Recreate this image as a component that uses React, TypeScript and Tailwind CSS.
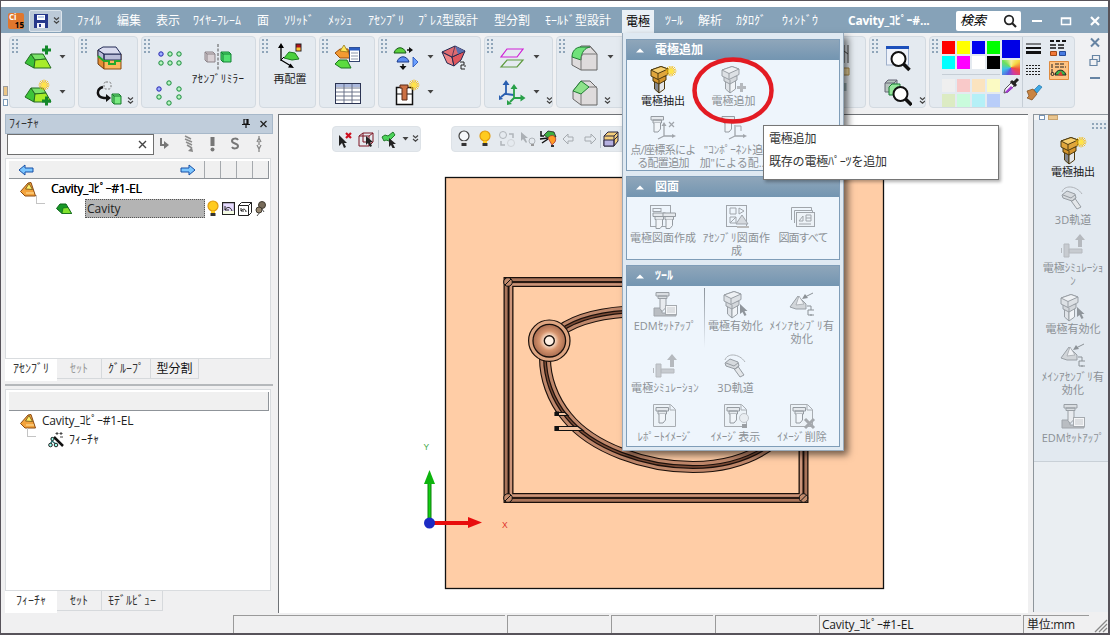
import React from 'react';

type P = { children?: React.ReactNode };

const Svg = ({ w = 28, h = 28, c = '', children }: { w?: number; h?: number; c?: string } & P) => (
  <svg width={w} height={h} viewBox={`0 0 ${w} ${h}`} className={`shrink-0 ${c}`} fill="none">
    {children}
  </svg>
);

/* ---------- small marks ---------- */
const Grip = () => (
  <Svg w={8} h={17} c="mt-px">
    {[1, 5, 9, 13].map((y) => (
      <g key={y} fill="#8fa5b9">
        <rect x="0" y={y} width="2" height="2" />
        <rect x="4" y={y} width="2" height="2" />
      </g>
    ))}
  </Svg>
);
const Drop = ({ c = '' }: { c?: string }) => (
  <Svg w={7} h={5} c={c}>
    <path d="M.5 0h6L3.500 3.500z" fill="#444" />
  </Svg>
);
const More = ({ c = '' }: { c?: string }) => (
  <Svg w={7} h={8} c={c}>
    <path d="M1 .5l2.500 2.200L6 .5M1 4l2.500 2.200L6 4" stroke="#444" strokeWidth="1.200" />
  </Svg>
);
const Sun = ({ x, y }: { x: number; y: number }) => (
  <g transform={`translate(${x} ${y})`}>
    <path d="M-5.500 0h11M0-5.500v11M-4-4l8 8M-4 4l8-8M-5-2l10 4M-5 2l10-4M-2-5l4 10M-2 5l4-10" stroke="#f4b800" strokeWidth=".8" />
    <circle r="2.600" fill="#ffe44a" />
  </g>
);

/* ---------- ribbon icons ---------- */
const Wedge = () => (
  <g stroke="#236b22" strokeLinejoin="round">
    <path d="M1 19L7 10l4 6-1 8z" fill="#3cc43a" />
    <path d="M7 10l12 0 3 5-11 1z" fill="#7be36a" />
    <path d="M11 16l11-1 5 9H10z" fill="#a8ec2a" />
  </g>
);
const AddPart = () => (
  <Svg>
    <Wedge />
    <path d="M18 6h9M22.500 1.500v9" stroke="#13882a" strokeWidth="3" />
  </Svg>
);
const NewPart = () => (
  <Svg>
    <g transform="translate(0 -1)"><Wedge /></g>
    <Sun x={20} y={6} />
    <path d="M18 22h9M22.500 17.500v9" stroke="#13882a" strokeWidth="3" />
  </Svg>
);
const MoldBox = () => (
  <Svg>
    <path d="M3 6l6 4v15l-6-5z" fill="#e58f33" stroke="#6b3a10" strokeLinejoin="round" />
    <path d="M9 10h17v15H9z" fill="#fbb85c" stroke="#8b4a10" />
    <path d="M3 6l6 4v7l-6-5zM9 10h17v6H9z" fill="#b9bcd8" stroke="#222a55" strokeLinejoin="round" />
    <path d="M3 6l5-3h13l5 7H9z" fill="#d9dbee" stroke="#222a55" strokeLinejoin="round" />
    <path d="M3 12l6 5h5v3h6v-3h6" stroke="#25a82b" strokeWidth="2" />
  </Svg>
);
const Replace = () => (
  <Svg>
    <rect x="9" y="3" width="7" height="7" rx="2" stroke="#777" strokeDasharray="2 1.500" />
    <path d="M8 8c-7 2-7 10 1 11h3" stroke="#111" strokeWidth="2.500" />
    <path d="M11 15l5 4-5 4z" fill="#111" />
    <path d="M17 15h7l2 2v8h-7l-2-2z" fill="#79ea80" stroke="#167a2c" />
    <path d="M17 15l2 2h7m-7 0v8" stroke="#167a2c" />
  </Svg>
);
const Dot = ({ x, y, b }: { x: number; y: number; b?: boolean }) => (
  <circle cx={x} cy={y} r="2.200" fill={b ? '#9fb0ff' : '#b9f5c0'} stroke={b ? '#2424b0' : '#188a3c'} />
);
const GridDots = () => (
  <Svg><Dot x={5} y={10} b /><Dot x={14} y={10} /><Dot x={23} y={10} /><Dot x={5} y={19} /><Dot x={14} y={19} /><Dot x={23} y={19} /></Svg>
);
const RingDots = () => (
  <Svg><Dot x={13} y={4} /><Dot x={3} y={10} b /><Dot x={23} y={10} /><Dot x={3} y={18} /><Dot x={23} y={18} /><Dot x={13} y={24} /></Svg>
);
const Mirror = () => (
  <Svg>
    <path d="M1 9h8l2 2v8H3l-2-2z" fill="#d8d0d4" stroke="#8b8388" /><path d="M1 9l2 2h8m-8 0v8" stroke="#8b8388" />
    <path d="M14 1v26" stroke="#555" strokeDasharray="3 1.500" />
    <path d="M17 9h8l2 2v8h-8l-2-2z" fill="#52e070" stroke="#128235" /><path d="M17 9l2 2h8m-8 0v8" stroke="#128235" />
  </Svg>
);
const Relocate = () => (
  <Svg>
    <path d="M5 19V4m0 14l10 6" stroke="#000" strokeWidth="1.300" />
    <path d="M5 1l3 5H2zM18 26l-6-.5 2.500-4z" fill="#000" />
    <path d="M8 16l5-6 6 1 4 6-7 1z" fill="#4bd03e" stroke="#1e7a22" />
    <rect x="20" y="2" width="5" height="7" fill="#b3121a" stroke="#222" /><rect x="20.500" y="5.500" width="4" height="3" fill="#f5c932" />
    <path d="M8 15l-3 3" stroke="#000" />
  </Svg>
);
const PartList = () => (
  <Svg>
    <path d="M1 9l5-4h8l2 9H6z" fill="#f39a32" stroke="#9a4f0e" /><path d="M6 7l4-6 4 7z" fill="#ffe75a" stroke="#8a6a10" strokeWidth=".7" />
    <path d="M1 20l4-4h8l4 8H7z" fill="#5bdc3e" stroke="#1c7423" />
    <rect x="15.500" y="3.500" width="10" height="14" fill="#fff" stroke="#32446f" /><path d="M15 5h11" stroke="#2b5cc0" strokeWidth="3" /><path d="M17 9h7m-7 3h7m-7 3h7" stroke="#8c97ab" />
  </Svg>
);
const Table = () => (
  <Svg>
    <rect x="1.500" y="4.500" width="25" height="20" fill="#fff" stroke="#2b3453" />
    <path d="M2 6.500h24" stroke="#aab8dc" strokeWidth="3" /><path d="M2 9h24M2 13h24M2 17h24M2 21h24M10 5v19M18 5v19" stroke="#5d6680" strokeWidth=".9" />
  </Svg>
);
const MoldParts = () => (
  <Svg>
    <path d="M1 9c2-7 10-7 12 0z" fill="#5bd13d" stroke="#16571b" /><path d="M4 18c2-7 10-7 12 0z" fill="#5d8df2" stroke="#1b3a8a" />
    <path d="M14 6h4M10 20v4" stroke="#111" strokeWidth="1.500" /><path d="M16 3l4 3-4 3zM6.500 22h7L10 26z" fill="#111" />
    <path d="M20 13l5 5-5 5z" fill="#6aa0ff" stroke="#1f4cb5" strokeWidth=".8" />
  </Svg>
);
const NewMold = () => (
  <Svg>
    <rect x="3.500" y="8.500" width="16" height="17" fill="#fff" stroke="#111" strokeWidth="1.500" /><path d="M3 15h17" stroke="#111" />
    <path d="M7 6h8v3h-1v12H9V9H7z" fill="#cc7144" stroke="#5b2a16" /><Sun x={21} y={6} />
  </Svg>
);
const RedBlock = () => (
  <Svg>
    <path d="M2 8l10 5 2 9-7-3z" fill="#f08486" stroke="#22284f" strokeLinejoin="round" />
    <path d="M12 13l13-6-4 9-7 6z" fill="#e0565d" stroke="#22284f" strokeLinejoin="round" />
    <path d="M2 8l13-6 10 5-13 6z" fill="#e06a70" stroke="#22284f" strokeLinejoin="round" />
    <path d="M15 2l10 5-7 3z" fill="#5a6fae" /><path d="M15 2l-3 11" stroke="#22284f" strokeWidth=".7" />
    <path d="M20 18h4v3h-3v4h4M24 22h2" stroke="#222" />
  </Svg>
);
const Planes = () => (
  <Svg>
    <path d="M9 5h16l-6 8H3z" stroke="#d020d6" strokeWidth="1.200" /><path d="M9 16h16l-6 7H3z" stroke="#5e9a3e" strokeWidth="1.200" />
  </Svg>
);
const Axes = () => (
  <Svg>
    <path d="M8 4v11l8 1M8 14l-5 4" stroke="#2a5fb0" strokeWidth="1.800" /><path d="M8 1l3.500 5h-7zM1 21v-5l4 4z" fill="#2a5fb0" />
    <path d="M16 8v11h8M16 19l-4 4" stroke="#28a048" strokeWidth="1.800" /><path d="M16 5l3.500 5h-7zM27.500 19l-5 3.500v-7zM9 26v-5l5 4z" fill="#28a048" />
  </Svg>
);
const Fillet = () => (
  <Svg>
    <path d="M1 13V21l9 5h16V10l-7-8H10z" fill="#dedbdc" stroke="#666" /><path d="M1 13c0-6 4-10 9-10h9c-5 1-9 5-9 13z" fill="#6fe27a" stroke="#1f7c33" strokeLinejoin="round" /><path d="M10 16v10M10 16c0-3 1-5 2-6h14M19 2.500l7 7.500" stroke="#777" />
  </Svg>
);
const Chamfer = () => (
  <Svg>
    <path d="M2 12v8l8 6h16V9l-7-7h-9z" fill="#dedbdc" stroke="#666" /><path d="M2 12L10 2l8 6-8 7z" fill="#8de28a" stroke="#1f7c33" strokeLinejoin="round" /><path d="M10 15v11M18 8h8" stroke="#777" />
  </Svg>
);
const Magnify = () => (
  <><circle cx="14.500" cy="15" r="7" fill="#fff" stroke="#111" strokeWidth="2" /><path d="M19.500 20l6 6" stroke="#111" strokeWidth="3.500" /></>
);
const ZoomWin = () => (
  <Svg><rect x="2.500" y="3" width="22" height="18" fill="#eef2fa" stroke="#9fb0cb" /><path d="M2 3.500h23" stroke="#1d50bb" strokeWidth="3" /><Magnify /></Svg>
);
const ZoomSel = () => (
  <Svg><path d="M1 4l3-3h9v9l-3 3H1zM1 4h9v9M10 4l3-3" fill="#b7c5bf" stroke="#667" /><path d="M5 8l3-3h8v8l-3 3H5z" fill="#95e69b" stroke="#177d31" /><g transform="translate(2 0)"><Magnify /></g></Svg>
);

/* ---------- electrode icons ---------- */
const Electrode = ({ off }: { off?: boolean }) => (
  <g stroke={off ? '#999fa5' : '#4c3a10'} strokeLinejoin="round">
    <path d="M5.500 15v8l4.500 4V15z" fill={off ? '#dfe3e8' : '#85888f'} />
    <path d="M10 27l5.500-4V13L10 16z" fill={off ? '#f1f4f7' : '#e4e6ea'} />
    <path d="M4 11v4l6 3 7-4v-4z" fill={off ? '#d4d8dc' : '#d3942d'} />
    <path d="M2 4v6l7 3.500 10-5V3L12 .5z" fill={off ? '#dde1e5' : '#e0a63c'} />
    <path d="M2 4L12 .5 19 3 9 7.500z" fill={off ? '#eef1f4' : '#f6cf70'} /><path d="M9 7.500v6M10 14v4" />
  </g>
);
const Extract = () => <Svg><Electrode /><Sun x={22} y={5} /></Svg>;
const AddElec = () => <Svg><Electrode off /><path d="M17 21.500h9M21.500 17v9" stroke="#b5b9be" strokeWidth="3" /></Svg>;
const Activate = () => <Svg><Electrode off /><path d="M18 13v10l2.500-2 2 4 2-1-2-4h3z" fill="#8f959b" /></Svg>;
const Holder = ({ x = 0, y = 0 }: { x?: number; y?: number }) => (
  <g transform={`translate(${x} ${y})`} stroke="#959ba1"><path d="M0 .5h12.500v3.500H0zM2 4h8.500v3H2z" fill="#e5e9ed" /><path d="M3 7v9h4l2.500-3V7" fill="#f1f5f9" /></g>
);
const PlacePt = () => (
  <Svg><Holder x={2} y={1} /><path d="M15 10v11h10M15 21l-6 3" stroke="#a0a5ab" strokeWidth="1.300" /><path d="M15 7l2.500 4h-5zM27 21l-4 2v-4z" fill="#a0a5ab" /><path d="M20 7l5 5m0-5l-5 5" stroke="#a0a5ab" strokeWidth="1.200" /></Svg>
);
const PlaceComp = () => (
  <Svg><Holder x={2} y={1} /><path d="M15 10v11h10M15 21l-6 3" stroke="#a0a5ab" strokeWidth="1.300" /><path d="M27 21l-4 2v-4z" fill="#a0a5ab" /><path d="M16 11h5v5" stroke="#a0a5ab" /></Svg>
);
const Drawing1 = () => (
  <Svg><rect x="1.500" y="2.500" width="20" height="21" stroke="#a0a5ab" /><rect x="4" y="5.500" width="8" height="3" stroke="#a0a5ab" /><Holder x={4} y={9.500} /><Holder x={14} y={9.500} /></Svg>
);
const Drawing2 = () => (
  <Svg><rect x="3.500" y="2.500" width="20" height="21" stroke="#a0a5ab" /><path d="M7 5h6v6H7zM16 5l5 3-5 3zM7 14h6v6H7zM7 20l6-6" stroke="#a0a5ab" /><path d="M13 21l6-9 6 9z" fill="#d6dadf" stroke="#a0a5ab" /><path d="M14 24h12" stroke="#bbb" strokeWidth="2" /></Svg>
);
const DrawingAll = () => (
  <Svg><path d="M2.500 17V4.500h20V7M5.500 20V7.500h18v2" stroke="#a0a5ab" /><rect x="7.500" y="9.500" width="18" height="14" fill="#edf2f7" stroke="#a0a5ab" /><path d="M10 18l4-5v5zM17 12h5v6h-5zM17 15h5M10 21h12" stroke="#a0a5ab" /></Svg>
);
const Edm = () => (
  <Svg><path d="M3 17h8v5h14v3H3z" fill="#b9bdc2" stroke="#a0a5ab" /><path d="M5 1.500h13v3.500H5zM7 5h9v2.500H7z" fill="#d9dde1" stroke="#999fa5" /><path d="M9 7.500v10l2 3 4-4v-9z" fill="#e8ebef" stroke="#999fa5" /><rect x="14.500" y="14.500" width="11" height="9" fill="#f5f6f8" stroke="#a5aaaf" /><path d="M16 17h8m-8 2h8m-8 2h8" stroke="#c5c9cd" /></Svg>
);
const MainAct = () => (
  <Svg><path d="M2 16L10 5l8 8v5H8z" fill="#d1d5d9" stroke="#999fa5" /><path d="M8 14l3-9 5 8z" fill="#f0f2f5" stroke="#a4a9ae" strokeWidth=".8" /><path d="M25 2l-8 4" stroke="#8b9196" /><path d="M14 8l3-5 3 4z" fill="#8b9196" /><path d="M19 15h4v4h-3v5h4M23 19h3M22 24h4" stroke="#8b9196" /></Svg>
);
const Simul = () => (
  <Svg><path d="M5 11h5v13H5zM2.500 15v5M10 16h13v4H10z" fill="#c7cbd0" stroke="#b6babf" /><path d="M19 14V7h-3l5-6 5 6h-3v7z" fill="#b5b9be" /></Svg>
);
const Orbit = () => (
  <Svg><path d="M3 7c2-7 14-7 20 2" stroke="#b0b4b9" /><path d="M10 13l8 11 4-2-7-10" fill="#e4e7ea" stroke="#969ca2" /><path d="M3 10l5-4 8 3 1 4-4 3-9-3z" fill="#d6dade" stroke="#969ca2" /><path d="M4 10l8 3 4-3M13 16l4-3" stroke="#969ca2" /></Svg>
);
const Sheet = ({ children }: P) => (
  <Svg><path d="M2.500 2.500h17l5 5v17h-22zM19 3v5h5" fill="#edf3f8" stroke="#a8adb2" /><Holder x={5} y={5} />{children}</Svg>
);
const Report = () => <Sheet />;
const ShowImg = () => <Sheet><circle cx="22" cy="16" r="4.500" fill="#e9edf1" stroke="#bfc4c9" /><path d="M20 22h5v4h-5z" fill="#9b9fa4" /></Sheet>;
const DelImg = () => <Sheet><path d="M17 17l9 9m0-9l-9 9" stroke="#a4a8ad" strokeWidth="3" /></Sheet>;

/* ---------- tree icons ---------- */
const Pyramid = () => (
  <Svg w={16} h={15}><path d="M.5 9.500L8 1l3-.5L15.500 14H5z" fill="#f3a33c" stroke="#8a4b12" /><path d="M5.500 7L9 1.500l3.500 6z" fill="#fff06a" stroke="#6e4f16" strokeWidth=".8" /><path d="M6 11h8" stroke="#ffe3a0" /></Svg>
);
const GreenPart = () => (
  <Svg w={16} h={12}><path d="M.5 5.500L4 1h6l5.500 9.500H6z" fill="#189727" stroke="#0c641b" /><path d="M7 5l5-.5 3.500 6H6z" fill="#82e22e" stroke="#0c641b" strokeWidth=".7" /></Svg>
);
const Bulb = ({ on }: { on?: boolean }) => (
  <Svg w={12} h={18}><circle cx="6" cy="6" r="5" fill={on ? '#ffcb1f' : '#f6f8fa'} stroke={on ? '#e09b10' : '#444'} strokeWidth="1.200" /><path d="M4 11h4v2H4z" fill={on ? '#ffcb1f' : '#ddd'} /><path d="M3.500 13h5v3h-5z" fill="#333" /></Svg>
);
const Wand = () => (
  <Svg w={16} h={16}><path d="M6 5l9 9" stroke="#111" strokeWidth="2.500" /><path d="M4 5v4M2 13l2-4 5 4" stroke="#1f6c6c" strokeWidth="1.300" /><circle cx="2.500" cy="13" r="1.800" fill="#9fe" stroke="#222" /><circle cx="8" cy="13" r="1.800" fill="#9fe" stroke="#222" /><circle cx="4.500" cy="7" r="1.600" fill="#9fe" stroke="#222" /><path d="M9 0v3M7.500 1.500h3M13 0v3m-1.500-1.500h3M12 5h3" stroke="#444" /></Svg>
);
const BlueArrow = ({ flip }: { flip?: boolean }) => (
  <Svg w={16} h={12} c={flip ? 'rotate-180' : ''}><path d="M1 6l6-5v3h8v4H7v3z" fill="#7cc6ff" stroke="#174fa5" /></Svg>
);

/* ---------- layout pieces ---------- */
const Group = ({ w, children }: { w: string } & P) => (
  <div className={`mr-[3px] flex h-[72px] shrink-0 items-start overflow-hidden rounded-sm border border-[#d3dae1] bg-[#e4eaf0] pl-[2px] ${w}`}>
    <Grip />
    {children}
  </div>
);
const Stack = ({ c = '', children }: { c?: string } & P) => <div className={`flex shrink-0 flex-col pt-[3px] ${c}`}>{children}</div>;
const Row = ({ children }: P) => <div className="flex h-[35px] items-center gap-[7px]">{children}</div>;

const menus: [string, string][] = [
  ['ﾌｧｲﾙ', 'w-[40px]'], ['編集', 'w-[39px]'], ['表示', 'w-[37px]'], ['ﾜｲﾔｰﾌﾚｰﾑ', 'w-[64px]'], ['面', 'w-[27px]'],
  ['ｿﾘｯﾄﾞ', 'w-[44px]'], ['ﾒｯｼｭ', 'w-[40px]'], ['ｱｾﾝﾌﾞﾘ', 'w-[50px]'], ['ﾌﾟﾚｽ型設計', 'w-[76px]'], ['型分割', 'w-[51px]'], ['ﾓｰﾙﾄﾞ型設計', 'w-[77px]'],
];
const menus2: [string, string][] = [['ﾂｰﾙ', 'w-[33px]'], ['解析', 'w-[38px]'], ['ｶﾀﾛｸﾞ', 'w-[46px]'], ['ｳｨﾝﾄﾞｳ', 'w-[66px]']];

const TitleBar = () => (
  <header className="flex h-[26px] shrink-0 items-center bg-[#86a2b8] text-[12px] text-white">
    <div className="ml-[7px] mt-px flex h-4 w-4 flex-col items-start rounded-[2px] bg-[#e0772d] text-[8px] font-bold leading-[8px]">
      <span className="pl-px">Ci</span><span className="self-end text-black">15</span>
    </div>
    <div className="ml-[5px] mt-px flex h-[22px] w-[33px] items-center rounded-[2px] border border-[#dce5ec] bg-[#bccad8] pl-[4px]">
      <Svg w={14} h={14}><path d="M0 0h14v14H0z" fill="#26388b" /><path d="M3 1h8v5H3z" fill="#fff" /><path d="M3 9h8v5H3z" fill="#f4f4fa" /><path d="M4 3h6" stroke="#7fa0dc" /><path d="M5 10h2v3H5z" fill="#26388b" /></Svg>
      <More c="ml-[5px]" />
    </div>
    <nav className="ml-[15px] flex items-center whitespace-nowrap">
      {menus.map(([t, w]) => <span key={t} className={`mt-[2px] shrink-0 ${w}`}>{t}</span>)}
      <span className="mt-[3px] flex h-[23px] w-[32px] shrink-0 items-center justify-center bg-[#e9f0f6] text-black">電極</span>
      <span className="w-[11px]" />
      {menus2.map(([t, w]) => <span key={t} className={`mt-[2px] shrink-0 ${w}`}>{t}</span>)}
    </nav>
    <span className="mt-[2px] w-[108px] shrink-0 whitespace-nowrap font-bold tracking-[-0.2px]">Cavity_ｺﾋﾟｰ#...</span>
    <div className="mt-px flex h-[20px] w-[65px] shrink-0 items-center justify-between rounded-[2px] bg-white pl-[4px] pr-[4px] text-[13px] italic text-black">
      検索
      <Svg w={14} h={14}><circle cx="6" cy="6" r="4.300" stroke="#222" strokeWidth="1.700" /><path d="M9 9l4 4" stroke="#222" strokeWidth="2.200" /></Svg>
    </div>
    <Svg w={70} h={14} c="ml-[10px] mt-[2px]"><path d="M1 7h10" stroke="#fff" strokeWidth="2" /><path d="M30.500 4h9v6.500h-9zM30 4.500h10" stroke="#fff" strokeWidth="1.500" /><path d="M60 3l8 8m0-8l-8 8" stroke="#fff" strokeWidth="2.200" /></Svg>
  </header>
);

const vivid = ['bg-[#f00]', 'bg-[#ff0]', 'bg-[#0000f0]', 'bg-[#0f0]', 'bg-[#0ff]', 'bg-[#f0f]', 'bg-white', 'bg-black'];
const pale = ['bg-[#efefef]', 'bg-[#f9c9c9]', 'bg-[#fbe3bf]', 'bg-[#fbfac3]', 'bg-[#dcebc3]', 'bg-[#c9fbdc]', 'bg-[#b5f0f7]', 'bg-[#b8cdf9]'];

const Ribbon = () => (
  <div className="flex h-[77px] shrink-0 items-start bg-[#f0f1f3] pt-[3px]">
    <div className="flex w-[8px] shrink-0 flex-col gap-[3px] pl-[2px] pt-[50px]">
      <span className="h-[10px] w-[5px] border border-[#9d9d9d] bg-[#ecc687]" /><span className="h-[7px] w-[5px] border border-[#7c9bb8] bg-white" />
    </div>
    <Group w="w-[66px]"><Stack c="ml-[4px]"><Row><AddPart /><Drop /></Row><Row><NewPart /><Drop /></Row></Stack></Group>
    <Group w="w-[60px]"><Stack c="ml-[6px]"><Row><MoldBox /></Row><Row><Replace /><More c="-ml-[3px] mt-4" /></Row></Stack></Group>
    <Group w="w-[115px]">
      <Stack c="ml-[4px]"><Row><GridDots /></Row><Row><RingDots /></Row></Stack>
      <div className="ml-[4px] flex w-[60px] shrink-0 flex-col items-center pt-[6px] text-[11px] leading-[16px] tracking-[0.4px] whitespace-nowrap"><Mirror />ｱｾﾝﾌﾞﾘﾐﾗｰ</div>
    </Group>
    <Group w="w-[57px]"><div className="ml-[1px] flex w-[38px] flex-col items-center pt-[5px] text-[11px] leading-[18px] whitespace-nowrap"><Relocate />再配置</div></Group>
    <Group w="w-[56px]"><Stack c="ml-[4px]"><Row><PartList /></Row><Row><Table /></Row></Stack></Group>
    <Group w="w-[103px]">
      <Stack c="ml-[4px]"><Row><MoldParts /><Drop c="-ml-px" /></Row><Row><NewMold /><Drop c="-ml-px" /></Row></Stack>
      <Stack c="ml-[6px]"><Row><RedBlock /></Row></Stack>
    </Group>
    <Group w="w-[69px]"><Stack c="ml-[3px]"><Row><Planes /><Drop /></Row><Row><Axes /><Drop /><More c="-ml-px mt-4" /></Row></Stack></Group>
    <Group w="w-[310px]"><Stack c="ml-[4px]"><Row><Fillet /><Drop c="mx-px" /></Row><Row><Chamfer /><More c="-ml-[2px] mt-4" /></Row></Stack>
      <Svg w={8} h={60} c="ml-auto mr-[14px] mt-1"><path d="M1 4v18M5 4v18M1 10l4 3" stroke="#444" /><path d="M0 27h6v7H0z" fill="#eed7a0" stroke="#a98a4c" /><path d="M2 42v8" stroke="#9aafb5" strokeWidth="3" /></Svg>
    </Group>
    <Group w="w-[57px]"><Stack c="ml-[4px]"><Row><ZoomWin /></Row><Row><ZoomSel /><More c="mt-4" /></Row></Stack></Group>
    <Group w="w-[146px]">
      <div className="ml-[2px] flex flex-col pt-[4px]">
        <div className="grid grid-cols-4 gap-[2px]">{vivid.map((c) => <i key={c} className={`h-[13px] w-[13px] ${c}`} />)}</div>
        <div className="mb-[4px] mt-[5px] h-px bg-[#c6ced6]" />
        <div className="grid grid-cols-4 gap-[2px]">{pale.map((c) => <i key={c} className={`h-[13px] w-[13px] ${c}`} />)}</div>
      </div>
      <div className="ml-[2px] flex w-[19px] flex-col gap-[2px] pt-[3px]">
        <i className="h-[18px] w-[18px] bg-[#0000e6]" />
        <i className="h-[15px] w-[18px] bg-[conic-gradient(from_0deg,#f9f2a0,#f5d742,#f04c3c,#d33a9e,#5b58e0,#3ec3e8,#6ee05c,#f9f2a0)]" />
        <Svg w={19} h={18}><path d="M2 16l1-4 8-8 3 3-8 8z" fill="#f4f2fb" stroke="#555" /><path d="M3 15l6-6 2 2-6 5z" fill="#a23ad0" /><path d="M9 4l5 5M12 6l4-4" stroke="#222" strokeWidth="3" /></Svg>
      </div>
      <div className="ml-px h-full w-px bg-[#c6ced6]" />
      <div className="ml-[3px] grid grid-cols-2 gap-x-[3px] gap-y-[3px] pt-[2px]">
        <Svg w={16} h={19}><path d="M0 5h15" stroke="#111" strokeWidth="1" /><path d="M0 9h15" stroke="#111" strokeWidth="2" /><path d="M0 13.500h15" stroke="#111" strokeWidth="3" /></Svg>
        <Svg w={20} h={19}><path d="M1 2h16" stroke="#111" strokeWidth="2" strokeDasharray="4 2" /><path d="M1 6h16M1 9h16" stroke="#111" strokeWidth="1.500" strokeDasharray="6 2" /><path d="M1.500 12.500h6v4h-6z" fill="#f1793a" stroke="#a34a16" /><path d="M10.500 12.500h6v4h-6z" fill="#477be2" stroke="#234b9a" /></Svg>
        <Svg w={16} h={19}><path d="M0 4.500h15M0 7.500h15M0 10.500h15M0 13.500h15" stroke="#222" strokeDasharray="2 1" /></Svg>
        <Svg w={20} h={19}><path d="M.5.5h19v18H.5z" fill="#ffc382" stroke="#df8b3e" /><path d="M3 3v9M6 3h10M6 6h11" stroke="#222" strokeDasharray="4 1" /><circle cx="3.500" cy="13" r="1.500" stroke="#222" /><path d="M6 14c1-6 9-7 11 0z" fill="#3bb34a" stroke="#222" /><path d="M9 14l3-4 2 5z" fill="#dd3d2f" /></Svg>
        <Svg w={17} h={18}><path d="M8 7l5-5 3 2-5 6z" fill="#3da8e4" stroke="#2177ab" strokeWidth=".7" /><path d="M1 8l6-2 4 5-5 6-5-2 2-2z" fill="#c98442" stroke="#7b4917" strokeWidth=".7" /></Svg>
      </div>
    </Group>
    <Svg w={12} h={48} c="ml-[11px] mt-px"><path d="M2 1.500l8 8m0-8l-8 8" stroke="#6684a3" strokeWidth="2" /><path d="M1 22.500h7v6H1zM3.500 22v-3.500h7v6H8" stroke="#6684a3" strokeWidth="1.200" /><path d="M1 41h10" stroke="#6684a3" strokeWidth="2" /></Svg>
  </div>
);

const Tabs = ({ items }: { items: [string, string, string][] }) => (
  <div className="flex h-[22px] shrink-0 items-start text-[12px]">
    {items.map(([t, w, c], i) => (
      <span key={t} className={`flex shrink-0 items-center justify-center whitespace-nowrap ${w} ${c} ${i === 0 ? 'h-[22px] bg-white pb-[2px]' : 'h-[20px] border-b border-r border-[#d6d9dc]'}`}>{t}</span>
    ))}
  </div>
);

const LeftDock = () => (
  <aside className="ml-[4px] flex w-[268px] shrink-0 flex-col pt-[4px] text-[12px]">
    <div className="flex h-[20px] shrink-0 items-center border border-[#a7b8c9] bg-[#c0cddb] pl-[3px] text-[#333]">
      ﾌｨｰﾁｬ
      <Svg w={28} h={10} c="ml-auto mr-[3px]"><path d="M3 0h4v5H3zM1 5.500h8M5 5v4M6 0v5" stroke="#111" strokeWidth="1.200" /><path d="M19.500 2l6 6m0-6l-6 6" stroke="#222" strokeWidth="1.300" /></Svg>
    </div>
    <div className="flex h-[24px] shrink-0 items-start">
      <div className="ml-[2px] flex h-[21px] w-[147px] items-center justify-end border border-[#6f6f6f] bg-white pr-[6px]">
        <Svg w={9} h={9}><path d="M1 1l7 7m0-7L1 8" stroke="#444" strokeWidth="1.400" /></Svg>
      </div>
      <Svg w={108} h={20} c="ml-[5px]">
        <path d="M2 4v7h5" stroke="#777" strokeWidth="2" /><path d="M5 7l5 4-5 4z" fill="#777" />
        <path d="M26 2l6 3M26 5l7 3M27 8l6 3M28 11l5 3" stroke="#8c8c8c" strokeWidth="1.500" /><path d="M34 18l-5-1 4-4z" fill="#888" />
        <path d="M53.500 3v9" stroke="#777" strokeWidth="4" /><circle cx="53.500" cy="15.500" r="2" fill="#777" />
        <path d="M79 6c-1-2-6-2-6 1s6 2 6 5-5 3-6 1" stroke="#777" strokeWidth="2" />
        <path d="M98 8l2-4 2 4M100 2v2M100 7v4M98 11l2 4 2-4M100 15v3" stroke="#888" strokeWidth="1.300" />
      </Svg>
    </div>
    <section className="flex h-[201px] w-[266px] shrink-0 flex-col border border-[#d9dcdf] bg-white pl-[3px] pt-[2px]">
      <div className="flex h-[18px] w-[260px] shrink-0 items-stretch border-b border-r border-[#8f9499] bg-[#f0f0f0]">
        <div className="flex w-[195px] items-center justify-between pl-[9px] pr-[8px]"><BlueArrow /><BlueArrow flip /></div>
        {[0, 1, 2, 3].map((i) => <i key={i} className="w-[16px] border-l border-[#a5a9ad]" />)}
      </div>
      <div className="flex h-[20px] items-center pl-[11px] text-black"><Pyramid /><span className="ml-[15px] whitespace-nowrap tracking-[-0.25px] [text-shadow:0.2px_0_0_#000]">Cavity_ｺﾋﾟｰ#1-EL</span></div>
      <div className="flex h-[19px] items-center pl-[27px]">
        <i className="mb-[18px] h-[9px] w-[9px] border-b border-l border-[#c4c4c4]" />
        <span className="ml-[11px] flex"><GreenPart /></span>
        <span className="ml-[13px] flex h-[19px] w-[120px] items-center border border-dotted border-[#555] bg-[#b4b4b4] pl-px text-[#222]">Cavity</span>
        <span className="ml-[2px] flex items-center gap-[3px]">
          <Bulb on />
          <Svg w={13} h={13}><path d="M.5.5h12v12H.5z" fill="#e6dbff" stroke="#222" strokeWidth="1.300" /><path d="M1 9h11v3H1z" fill="#f4fbe4" /><path d="M3 4v4h4M3 8c2-4 6-3 7 1" stroke="#222" /></Svg>
          <Svg w={14} h={14}><path d="M.5 3.500h10v10H.5zM.5 3.500l3-3h10v10l-3 3M10.500 3.500l3-3" stroke="#222" fill="#fff" /><path d="M3 6v3h3M3 9c2-3 5-2 5 1" stroke="#222" /></Svg>
          <Svg w={13} h={16}><circle cx="7" cy="4" r="3.500" fill="#776b5a" stroke="#403a30" /><circle cx="4" cy="9" r="3" fill="#95866e" stroke="#403a30" /><path d="M5 11l-3 4M7 8l2 3" stroke="#555" /></Svg>
        </span>
      </div>
    </section>
    <Tabs items={[['ｱｾﾝﾌﾞﾘ', 'w-[52px]', 'text-[#333]'], ['ｾｯﾄ', 'w-[45px]', 'text-[#999]'], ['ｸﾞﾙｰﾌﾟ', 'w-[49px]', 'text-[#333]'], ['型分割', 'w-[48px]', 'text-[#111]']]} />
    <div className="mb-[3px] mt-[3px] h-[2px] shrink-0 bg-[#b5b8bb]" />
    <section className="flex h-[202px] w-[266px] shrink-0 flex-col border border-[#d9dcdf] bg-white pl-[3px] pt-[2px]">
      <div className="h-[19px] w-[260px] shrink-0 border-b border-r border-[#8f9499] bg-[#f0f0f0]" />
      <div className="flex h-[20px] items-center pl-[11px]"><Pyramid /><span className="ml-[6px] whitespace-nowrap tracking-[-0.2px] text-[#222]">Cavity_ｺﾋﾟｰ#1-EL</span></div>
      <div className="flex h-[18px] items-center pl-[18px]">
        <i className="mb-[16px] h-[9px] w-[9px] border-b border-l border-[#c4c4c4]" /><span className="ml-[12px] flex"><Wand /></span><span className="ml-[5px]">ﾌｨｰﾁｬ</span>
      </div>
    </section>
    <Tabs items={[['ﾌｨｰﾁｬ', 'w-[52px]', 'text-[#333]'], ['ｾｯﾄ', 'w-[45px]', 'text-[#333]'], ['ﾓﾃﾞﾙﾋﾞｭｰ', 'w-[61px]', 'text-[#333]']]} />
  </aside>
);

const lower = 'M545 358C545 377 552 399 567 417C592 448 645 467 693 467C735 467 765 452 785 432';
const upper = 'M560 331C576 319 602 312 640 311';

const Scene = () => (
  <svg width="749" height="497" viewBox="279 115 749 497" fill="none">
    <defs>
      <radialGradient id="boss"><stop offset=".3" stopColor="#ffe6d2" /><stop offset=".6" stopColor="#d6946e" /><stop offset="1" stopColor="#a86c50" /></radialGradient>
      <linearGradient id="gy" x1="0" x2="1"><stop stopColor="#0a7d0a" /><stop offset=".5" stopColor="#12d012" /><stop offset="1" stopColor="#0a7d0a" /></linearGradient>
    </defs>
    <rect x="445.500" y="177.500" width="438" height="411" fill="#ffcda6" stroke="#111" strokeWidth="1.300" />
    <rect x="508.500" y="282" width="295" height="216" stroke="#1b100b" strokeWidth="10" />
    <rect x="508.500" y="282" width="295" height="216" stroke="#a9745a" strokeWidth="7.500" />
    <rect x="508.500" y="282" width="295" height="216" stroke="#1b100b" strokeWidth="1.800" />
    <rect x="511" y="284.500" width="290" height="211" stroke="#cc957a" strokeWidth="2" />
    {[[508, 282], [508, 498], [803.5, 498]].map(([x, y]) => <g key={`${x}${y}`}><circle cx={x} cy={y} r="4.300" fill="#c18a6c" stroke="#111" /><path d={`M${x - 3} ${y + 3}l6-6`} stroke="#111" /></g>)}
    {[lower, upper].map((d) => (
      <g key={d}>
        <path d={d} stroke="#1b100b" strokeWidth="12" /><path d={d} stroke="#bf876a" strokeWidth="9.800" /><path d={d} stroke="#1b100b" strokeWidth="3.800" /><path d={d} stroke="#7b4b36" strokeWidth="1.400" />
      </g>
    ))}
    <circle cx="549.300" cy="340.700" r="20.700" fill="#dfa682" stroke="#1b100b" strokeWidth="1.200" />
    <circle cx="549.300" cy="340.700" r="16.300" fill="url(#boss)" stroke="#1b100b" strokeWidth="1.300" />
    <circle cx="549.300" cy="340.700" r="5" fill="#fff0e4" stroke="#1b100b" strokeWidth="1.400" />
    <path d="M555 412.500h10l3 3h-13zM555 426.500h23l5 4h-28z" fill="#f4c5a3" stroke="#111" strokeWidth="1.200" />
    <path d="M555 411.500h4v4h-4zM555 426h4v4h-4z" fill="#111" />
    <path d="M427.500 484h4v38h-4z" fill="url(#gy)" /><path d="M429.500 470l5.500 14h-11z" fill="#0db40d" />
    <path d="M434 521h35v4h-35z" fill="#e80d0d" /><path d="M482 522.500l-14 5.500v-11z" fill="#e80d0d" />
    <circle cx="429.500" cy="523" r="5.500" fill="#1c2bc4" />
    <text x="423.500" y="450" fontSize="8.500" fontFamily="Liberation Sans" fill="#3faa3f">Y</text>
    <text x="502" y="528" fontSize="8.500" fontFamily="Liberation Sans" fill="#e0322a">X</text>
  </svg>
);

const FloatBars = () => (
  <div className="absolute left-[53px] top-[11px] flex gap-[30px]">
    <div className="flex h-[26px] w-[89px] items-center rounded-sm border border-[#dde2e7] bg-[#e5eaef] pl-[3px]">
      <Svg w={19} h={18}><path d="M3 5v11l3-3 2 5 2-1-2-4h3z" fill="#222" /><path d="M10 3l5 5m0-5l-5 5" stroke="#cf1020" strokeWidth="2.200" /></Svg>
      <Svg w={20} h={18} c="ml-px"><path d="M3 6l4-3h10v9l-4 4H3zM3 6h10v10m0-10l4-3M7 3v9h9" stroke="#7d1522" /><path d="M10 6v9l2-2 2 4 2-1-2-4h3z" fill="#222" /></Svg>
      <i className="mx-[2px] h-[18px] w-px bg-[#b9c3cc]" />
      <Svg w={18} h={18}><path d="M1 7l3-2 3 1 5-4 2 3-6 6-3-1-2 1z" fill="#4cd35a" stroke="#237a2a" /><path d="M8 8v9l2-2 2 4 2-1-2-4h3z" fill="#222" /></Svg>
      <Drop c="ml-[3px]" /><More c="ml-[3px]" />
    </div>
    <div className="flex h-[26px] w-[240px] items-center rounded-sm border border-[#dde2e7] bg-[#e5eaef] pl-[6px]">
      <Bulb /><span className="ml-[9px] flex"><Bulb on /></span>
      <Svg w={19} h={18} c="ml-[7px]"><circle cx="5" cy="5" r="3.500" stroke="#b0b5ba" /><circle cx="13" cy="13" r="3.500" stroke="#d0d4d8" /><path d="M11 4h4v4M3 11v4h4" stroke="#b0b5ba" strokeWidth="1.500" /></Svg>
      <Svg w={18} h={18} c="ml-[2px]"><path d="M2 2v9l2-2 3 4 1-1-2-4h3z" fill="#abb0b5" /><circle cx="13" cy="11" r="3" stroke="#b0b5ba" /><path d="M12 15h3" stroke="#999" strokeWidth="2" /></Svg>
      <Svg w={19} h={18} c="ml-[2px]"><path d="M2 1v5h3M1 9l8-1M3 13l6-4" stroke="#111" strokeWidth="1.500" /><path d="M5 5l4-4 6 1 2 5-8 1z" fill="#3caf3f" stroke="#222" strokeWidth=".8" /><path d="M9 8c3-5 10-2 7 4l-3 3z" fill="#ff9b25" stroke="#a33" strokeWidth=".8" /><path d="M12 16h3" stroke="#333" strokeWidth="2" /></Svg>
      <Svg w={38} h={14} c="ml-[4px]"><path d="M1 7l5-5v3h5v4H6v3zM34 7l-5-5v3h-6v4h6v3z" stroke="#a6abb0" /></Svg>
      <i className="h-[18px] w-px bg-[#b9c3cc]" />
      <Svg w={16} h={18} c="ml-[2px]"><path d="M1 6l4-4h10v9l-4 5H1z" fill="#f4ce7a" stroke="#2b2740" /><path d="M1 10h10v6H1z" fill="#b5b0e0" stroke="#2b2740" /><path d="M1 6h10v10M11 6l4-4M11 10l4-4" stroke="#2b2740" /></Svg>
    </div>
  </div>
);

const Item = ({ icon, lines, on, h = '', t = '' }: { icon: React.ReactNode; lines: string[]; on?: boolean; h?: string; t?: string }) => (
  <div className={`flex flex-col items-center whitespace-nowrap text-[11px] leading-[13px] ${h} ${t} ${on ? 'text-[#1a1a1a]' : 'text-[#8c9196]'}`}>
    {icon}
    {lines.map((l) => <span key={l}>{l}</span>)}
  </div>
);

const RightDock = () => (
  <aside className="mt-[4px] flex h-[498px] w-[75px] shrink-0 flex-col border-l border-t border-[#8e959b] bg-[#eaeef2]">
    <div className="flex h-[347px] shrink-0 flex-col border-b border-[#c9d0d7] bg-[#e2e9f0]">
      <div className="flex h-[5px] gap-[3px] bg-[#f3f4f5] pl-[5px]"><i className="h-[5px] w-[6px] border border-[#7793b4] bg-white" /><i className="h-[5px] w-[10px] border border-[#c9a36e] bg-[#eac58e]" /></div>
      <Svg w={16} h={7} c="ml-auto mt-[3px]">{[0, 4, 8, 12].map((x) => <g key={x} fill="#8fa5b9"><rect x={x} width="2" height="2" /><rect x={x} y="4" width="2" height="2" /></g>)}</Svg>
      <div className="flex w-[78px] flex-col items-center pt-[7px]">
        <Item on h="h-[48px]" icon={<Extract />} lines={['電極抽出']} />
        <Item h="h-[48px]" icon={<Orbit />} lines={['3D軌道']} />
        <Item h="h-[61px]" icon={<Simul />} lines={['電極ｼﾐｭﾚｰｼｮ', 'ﾝ']} />
        <Item h="h-[48px]" icon={<Activate />} lines={['電極有効化']} />
        <Item h="h-[61px]" t="tracking-[0.2px]" icon={<MainAct />} lines={['ﾒｲﾝｱｾﾝﾌﾞﾘ有', '効化']} />
        <Item icon={<Edm />} lines={['EDMｾｯﾄｱｯﾌﾟ']} />
      </div>
    </div>
  </aside>
);

const Section = ({ title, h, children }: { title: string; h: string } & P) => (
  <section className={`flex shrink-0 flex-col border border-[#7f9db8] bg-[#eef5fc] ${h}`}>
    <div className="flex h-[20px] shrink-0 items-center bg-gradient-to-b from-[#8fa6ba] to-[#7395b1] pl-[9px] text-[12px] font-bold text-white">
      <Svg w={8} h={5}><path d="M0 4.500L4 .5l4 4z" fill="#fff" /></Svg><span className="ml-[11px]">{title}</span>
    </div>
    {children}
  </section>
);

const ElectrodeMenu = () => (
  <div className="absolute left-[622px] top-[33px] flex h-[418px] w-[222px] flex-col gap-[5px] border border-t-0 border-[#9aabbb] bg-[#dfe9f2] px-[3px] pt-[6px] shadow-[4px_4px_7px_rgba(0,0,0,0.55)]">
    <Section title="電極追加" h="h-[132px]">
      <div className="grid grid-cols-[72px_69px_70px] pt-[6px]">
        <Item on h="h-[49px]" icon={<Extract />} lines={['電極抽出']} /><Item h="h-[49px]" icon={<AddElec />} lines={['電極追加']} /><i />
        <Item t="tracking-[-0.7px]" icon={<PlacePt />} lines={['点/座標系によ', 'る配置追加']} /><Item icon={<PlaceComp />} lines={['"ｺﾝﾎﾟｰﾈﾝﾄ追', '加"による配...']} />
      </div>
    </Section>
    <Section title="図面" h="h-[84px]">
      <div className="grid grid-cols-[72px_75px_58px] pt-[6px]">
        <Item icon={<Drawing1 />} lines={['電極図面作成']} /><Item t="tracking-[0.2px]" icon={<Drawing2 />} lines={['ｱｾﾝﾌﾞﾘ図面作', '成']} /><Item t="tracking-[-1px]" icon={<DrawingAll />} lines={['図面すべて']} />
      </div>
    </Section>
    <Section title="ﾂｰﾙ" h="h-[182px]">
      <div className="relative grid grid-cols-[76px_65px_68px] pt-[5px]">
        <i className="absolute left-[77px] top-[2px] h-[60px] w-px bg-gradient-to-b from-[#8a929a] to-transparent" />
        <Item h="h-[62px]" icon={<Edm />} lines={['EDMｾｯﾄｱｯﾌﾟ']} /><Item h="h-[62px]" icon={<Activate />} lines={['電極有効化']} /><Item h="h-[62px]" t="tracking-[0.5px]" icon={<MainAct />} lines={['ﾒｲﾝｱｾﾝﾌﾞﾘ有', '効化']} />
        <Item h="h-[49px]" t="tracking-[0.2px]" icon={<Simul />} lines={['電極ｼﾐｭﾚｰｼｮﾝ']} /><Item h="h-[49px]" icon={<Orbit />} lines={['3D軌道']} /><i />
        <Item icon={<Report />} lines={['ﾚﾎﾟｰﾄｲﾒｰｼﾞ']} /><Item icon={<ShowImg />} lines={['ｲﾒｰｼﾞ表示']} /><Item icon={<DelImg />} lines={['ｲﾒｰｼﾞ削除']} />
      </div>
    </Section>
  </div>
);

const StatusBar = () => (
  <footer className="ml-[232px] flex h-[21px] shrink-0 items-end gap-[2px] text-[12px] text-[#222]">
    {['w-[272px]', 'w-[102px]', 'w-[102px]', 'w-[102px]'].map((w, i) => <div key={i} className={`h-[18px] shrink-0 border-l border-t border-[#9a9a9a] ${w}`} />)}
    <div className="flex h-[18px] w-[202px] shrink-0 items-center border-l border-t border-[#9a9a9a] pl-[2px] tracking-[-0.2px]">Cavity_ｺﾋﾟｰ#1-EL</div>
    <div className="flex h-[18px] w-[66px] shrink-0 items-center whitespace-nowrap border-l border-t border-[#9a9a9a] pl-[3px] tracking-[-0.3px]">単位:mm</div>
    <Svg w={14} h={14} c="ml-auto"><path d="M1 13L13 1M5 13l8-8M9 13l4-4" stroke="#888" strokeWidth="1.300" /></Svg>
  </footer>
);

export default function App() {
  return (
    <div className="relative flex h-[635px] w-[1110px] flex-col overflow-hidden border-b-2 border-l border-r-2 border-t border-[#57535a] bg-[#f0f0f1] font-['Open_Sans','Noto_Sans_CJK_JP',sans-serif] text-[#222]">
      <div className="h-[6px] shrink-0 bg-white" />
      <TitleBar />
      <Ribbon />
      <main className="flex h-[502px] shrink-0">
        <LeftDock />
        <div className="relative ml-[5px] mr-[5px] mt-[4px] h-[499px] w-[750px] shrink-0 border-l border-t border-[#6f7276] bg-white">
          <Scene />
          <FloatBars />
        </div>
        <RightDock />
      </main>
      <StatusBar />
      <div className="absolute -left-px -top-px h-0 w-0">
        <ElectrodeMenu />
        <svg className="absolute left-[690px] top-[55px]" width="86" height="74" viewBox="0 0 86 74" fill="none"><ellipse cx="43" cy="35.500" rx="38.500" ry="31" stroke="#e31b23" strokeWidth="4.500" /></svg>
        <div className="absolute left-[763px] top-[125px] h-[55px] w-[236px] whitespace-nowrap border border-[#767676] bg-white pl-[5px] pt-px text-[12px] leading-[23px] tracking-[-0.2px] text-[#333] shadow-[2px_2px_3px_rgba(0,0,0,0.3)]">
          <p>電極追加</p>
          <p>既存の電極ﾊﾟｰﾂを追加</p>
        </div>
      </div>
    </div>
  );
}
